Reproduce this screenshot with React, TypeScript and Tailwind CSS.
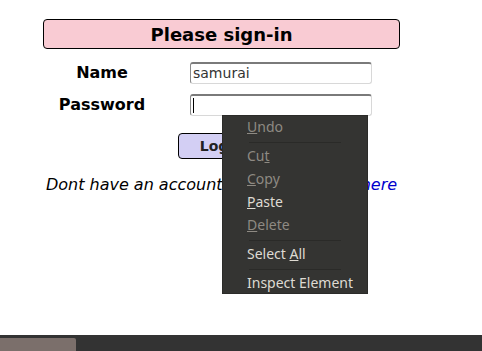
const sans = { fontFamily: '"DejaVu Sans", Verdana, sans-serif' };

function MenuItem({ children, enabled }: { children: React.ReactNode; enabled?: boolean }) {
    return (
        <div className={`h-[23px] flex items-center pl-[24px] pb-[2px] text-[14px] ${enabled ? 'text-[#dedad2]' : 'text-[#8e8a83]'}`}>
            <span className="whitespace-pre">{children}</span>
        </div>
    )
}

function Sep() {
    return (
        <div className="h-[6px] flex items-center pl-[26px] pr-[26px]">
            <div className="h-px w-full bg-[#2a2a28]" />
        </div>
    )
}

export default function App() {
    return (
        <div className="relative h-[351px] w-[482px] flex flex-col bg-white overflow-hidden" style={sans}>
            <div className="pt-[19px] pl-[43px] w-[400px]">
                <h2 className="h-[30px] w-[357px] flex items-center justify-center rounded-[4px] border border-black bg-[#f9cbd3] text-[18px] font-bold text-black">
                    Please sign-in
                </h2>

                <div className="mt-[13px] flex flex-col gap-[10px]">
                    <div className="flex items-center">
                        <label className="w-[118px] text-center text-[16px] leading-[22px] font-bold">Name</label>
                        <div className="ml-[29px] h-[22px] w-[182px] rounded-[3px] border border-[#d8d8d8] border-t-[#7a7a7a] border-l-[#8a8a8a] border-t-2 bg-white flex items-center pl-[2px] text-[14px] text-[#333]">
                            samurai
                        </div>
                    </div>
                    <div className="flex items-center">
                        <label className="w-[118px] text-center text-[16px] leading-[22px] font-bold">Password</label>
                        <div className="ml-[29px] h-[22px] w-[182px] rounded-[3px] border border-[#d8d8d8] border-t-[#7a7a7a] border-l-[#8a8a8a] border-t-2 bg-white flex items-center pl-[2px]">
                            <div className="h-[15px] w-px bg-black" />
                        </div>
                    </div>
                </div>

                <div className="mt-[17px] flex justify-center">
                    <button className="h-[26px] w-[88px] rounded-[4px] border border-black bg-[#d3cff4] text-[14px] font-bold text-[#222]">
                        Login
                    </button>
                </div>

                <p className="mt-[14px] w-[357px] text-center text-[16px] italic text-black whitespace-pre">
                    Dont have an account?   Register from <a className="text-[#0000cc]">here</a>
                </p>
            </div>

            <div className="mt-auto h-[16px] bg-[#333333] flex items-end">
                <div className="h-[13px] w-[76px] bg-[#7b6f6b] rounded-tr-[2px]" />
            </div>

            <div className="absolute left-[222px] top-[115px] w-[146px] h-[179px] bg-[#343432] border border-[#2b2b29]" style={{ fontFamily: '"Noto Sans", "Open Sans", sans-serif' }}>
                <MenuItem><u>U</u>ndo</MenuItem>
                <Sep />
                <MenuItem>Cu<u>t</u></MenuItem>
                <MenuItem><u>C</u>opy</MenuItem>
                <MenuItem enabled><u>P</u>aste</MenuItem>
                <MenuItem><u>D</u>elete</MenuItem>
                <Sep />
                <MenuItem enabled>Select <u>A</u>ll</MenuItem>
                <Sep />
                <MenuItem enabled>Inspect Element</MenuItem>
            </div>
        </div>
    )
}
